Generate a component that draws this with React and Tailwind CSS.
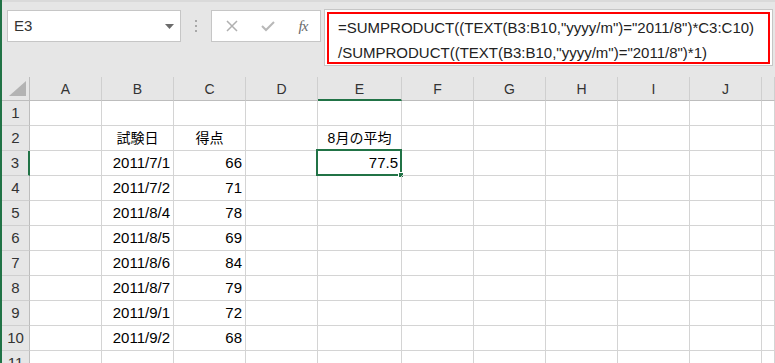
import React from "react";

const COLS = ["A", "B", "C", "D", "E", "F", "G", "H", "I", "J", ""];

const ROWS = [
  {},
  { B: ["試験日", "c"], C: ["得点", "c"], E: ["8月の平均", "c"] },
  { B: ["2011/7/1", "r"], C: ["66", "r"], E: ["77.5", "r"] },
  { B: ["2011/7/2", "r"], C: ["71", "r"] },
  { B: ["2011/8/4", "r"], C: ["78", "r"] },
  { B: ["2011/8/5", "r"], C: ["69", "r"] },
  { B: ["2011/8/6", "r"], C: ["84", "r"] },
  { B: ["2011/8/7", "r"], C: ["79", "r"] },
  { B: ["2011/9/1", "r"], C: ["72", "r"] },
  { B: ["2011/9/2", "r"], C: ["68", "r"] },
  {},
];

function TopBar() {
  return (
    <div className="h-[77px] shrink-0 bg-[#e6e6e6] flex items-start pl-[5px] border-t-[2px] border-[#dadada]">
      <div className="mt-[8px] w-[174px] h-[32px] bg-white border border-[#c6c6c6] flex items-center pl-[6px] pr-[6px] justify-between">
        <span className="text-[15px] text-[#333]">E3</span>
        <svg width="9" height="6" viewBox="0 0 9 6" className="mt-[1px]">
          <polygon points="0,0 9,0 4.5,5" fill="#6b6b6b" />
        </svg>
      </div>
      <div className="w-[30px] h-[32px] mt-[8px] flex flex-col items-center justify-center gap-[3px]">
        <div className="w-[2px] h-[2px] bg-[#a8a8a8]" />
        <div className="w-[2px] h-[2px] bg-[#a8a8a8]" />
        <div className="w-[2px] h-[2px] bg-[#a8a8a8]" />
      </div>
      <div className="mt-[8px] w-[110px] h-[32px] bg-white border border-[#c6c6c6] flex items-center">
        <div className="w-[37px] flex justify-center pl-[2px]">
          <svg width="12" height="12" viewBox="0 0 12 12">
            <path d="M1 1 L11 11 M11 1 L1 11" stroke="#b0b0b0" strokeWidth="1.5" />
          </svg>
        </div>
        <div className="w-[37px] flex justify-center">
          <svg width="14" height="12" viewBox="0 0 14 12">
            <path d="M1 6 L5 10 L13 2" stroke="#b8b8b8" strokeWidth="2" fill="none" />
          </svg>
        </div>
        <div className="w-[34px] flex justify-center">
          <span className="font-['Liberation_Serif',serif] italic text-[15px] text-[#6a6a6a] tracking-[-1px]">fx</span>
        </div>
      </div>
      <div className="ml-[3px] mt-[7px] w-[449px] h-[57px] bg-white border border-[#c6c6c6] p-[2px] pb-[1px]">
        <div className="h-full border-2 border-[#ff0000] pl-[9px] pt-[1px] text-[15px] leading-[25px] text-[#222] whitespace-nowrap">
          <div>=SUMPRODUCT((TEXT(B3:B10,"yyyy/m")="2011/8")*C3:C10)</div>
          <div>/SUMPRODUCT((TEXT(B3:B10,"yyyy/m")="2011/8")*1)</div>
        </div>
      </div>
    </div>
  );
}

function Grid() {
  return (
    <div className="shrink-0 grid grid-cols-[28px_72px_72px_72px_72px_84px_72px_72px_72px_72px_72px_1fr] auto-rows-[25px] grid-rows-[24px] bg-white">
      <div className="relative bg-[#e6e6e6] border-r border-b border-[#bdbdbd]">
        <svg width="18" height="16" viewBox="0 0 18 16" className="absolute left-[7px] top-[4px]">
          <polygon points="17,0 17,15 0,15" fill="#b3b3b3" />
        </svg>
      </div>
      {COLS.map((c, i) => (
        <div
          key={"h" + i}
          className={
            "bg-[#e6e6e6] border-r border-[#cfcfcf] flex items-center justify-center text-[14px] text-[#333] pt-[2px] " +
            (c === "E" ? "border-b-2 border-b-[#217346]" : "border-b border-b-[#bdbdbd]")
          }
        >
          {c}
        </div>
      ))}
      {ROWS.map((row, ri) => (
        <React.Fragment key={"r" + ri}>
          <div
            className={
              "bg-[#e6e6e6] border-b border-b-[#cfcfcf] flex items-center justify-center text-[15px] text-[#333] pt-[1px] " +
              (ri === 2 ? "border-r-2 border-r-[#217346]" : "border-r border-r-[#bdbdbd]")
            }
          >
            {ri + 1}
          </div>
          {COLS.map((c, ci) => {
            const v = row[c];
            const sel = ri === 2 && c === "E";
            return (
              <div
                key={ri + "-" + ci}
                className={
                  "relative border-r border-b border-[#d4d4d4] flex items-center pt-[1px] px-[3px] text-[15px] text-black whitespace-nowrap " +
                  (v && v[1] === "c" ? "justify-center" : "justify-end")
                }
              >
                {v ? <span className={v[1] === "c" ? "text-[14px]" : ""}>{v[0]}</span> : null}
                {sel ? (
                  <div className="absolute left-[-2px] top-[-2px] w-[86px] h-[27px] border-2 border-[#217346]">
                    <div className="absolute right-[-4px] bottom-[-4px] w-[6px] h-[6px] bg-[#217346] border border-white" />
                  </div>
                ) : null}
              </div>
            );
          })}
        </React.Fragment>
      ))}
    </div>
  );
}

export default function App() {
  return (
    <div className="w-[775px] h-[363px] overflow-hidden flex bg-[#e6e6e6] font-['Liberation_Sans','Noto_Sans_CJK_JP',sans-serif]">
      <div className="w-[2px] shrink-0 bg-[#217346]" />
      <div className="flex-1 flex flex-col min-w-0 overflow-hidden">
        <TopBar />
        <Grid />
      </div>
    </div>
  );
}
